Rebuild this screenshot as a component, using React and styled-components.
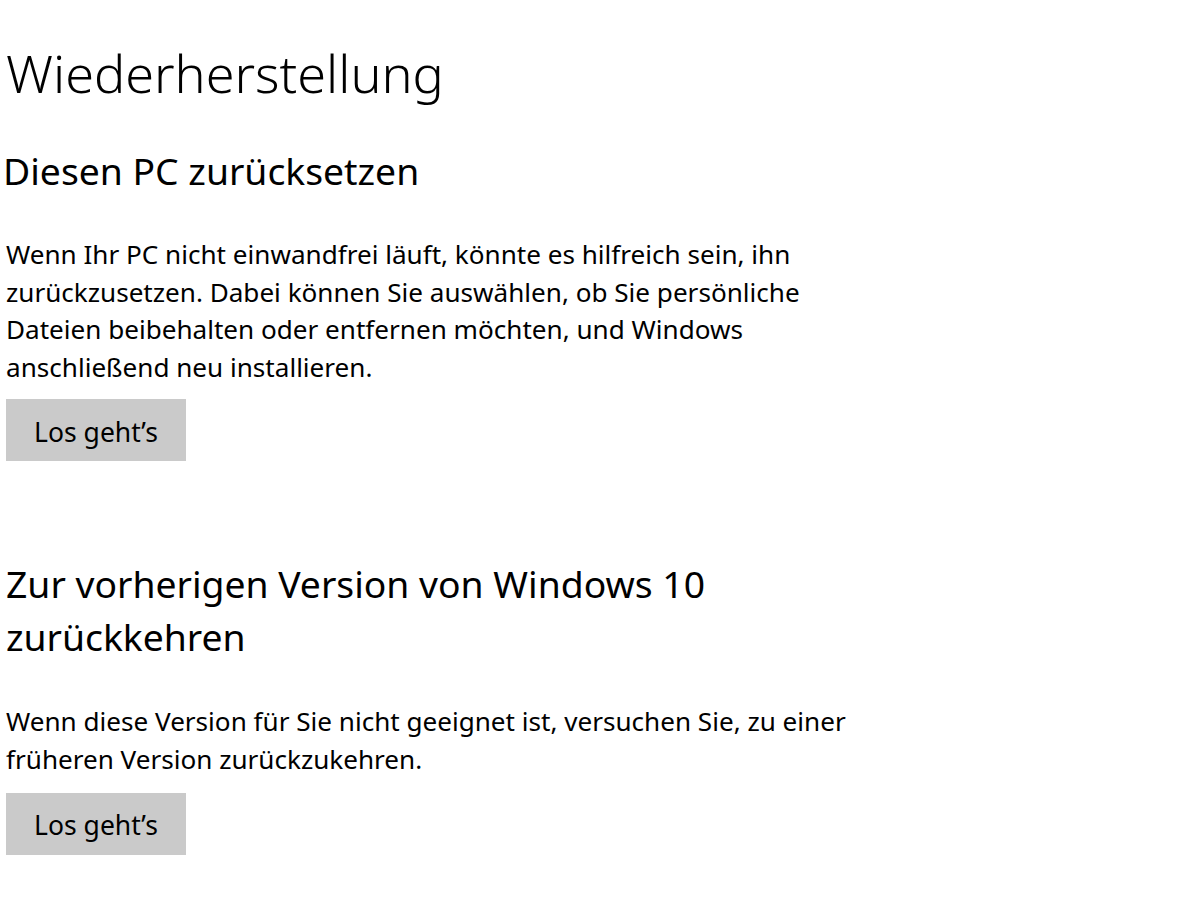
import React from "react";
import styled, { createGlobalStyle } from "styled-components";

const Global = createGlobalStyle`
  html, body { margin: 0; padding: 0; background: #ffffff; }
  body { font-family: "Noto Sans", "Open Sans", sans-serif; color: #000; }
`;

const Page = styled.main`
  padding: 41px 0 0 6px;
  display: flex;
  flex-direction: column;
`;

const Title = styled.h1`
  margin: 0;
  font-size: 52.2px;
  font-weight: 300;
  line-height: 64px;
  white-space: nowrap;
`;

const Section = styled.section`
  display: flex;
  flex-direction: column;
  align-items: flex-start;
  margin-top: ${(p) => p.$top}px;
`;

const Heading = styled.h2`
  margin: 0 0 0 ${(p) => p.$shift || 0}px;
  font-size: 37.3px;
  font-weight: 400;
  line-height: 53px;
  white-space: nowrap;
`;

const Text = styled.p`
  margin: ${(p) => p.$gap}px 0 0;
  font-size: 26.1px;
  line-height: 37.6px;
  white-space: nowrap;
`;

const Button = styled.button`
  margin-top: ${(p) => p.$gap}px;
  width: 180px;
  height: 62px;
  border: none;
  padding: 3px 0 0;
  background-color: #cccccc;
  background-image: radial-gradient(rgba(0, 0, 0, 0.025) 0.6px, transparent 0.8px);
  background-size: 2px 2px;
  font-family: inherit;
  font-size: 26.5px;
  line-height: 1;
  color: #000;
  cursor: pointer;
`;

export default function App() {
  return (
    <>
      <Global />
      <Page>
        <Title>Wiederherstellung</Title>
        <Section $top={39}>
          <Heading $shift={-3}>Diesen PC zurücksetzen</Heading>
          <Text $gap={39}>
            Wenn Ihr PC nicht einwandfrei läuft, könnte es hilfreich sein, ihn
            <br />
            zurückzusetzen. Dabei können Sie auswählen, ob Sie persönliche
            <br />
            Dateien beibehalten oder entfernen möchten, und Windows
            <br />
            anschließend neu installieren.
          </Text>
          <Button $gap={13}>Los geht’s</Button>
        </Section>
        <Section $top={96}>
          <Heading>
            Zur vorherigen Version von Windows 10
            <br />
            zurückkehren
          </Heading>
          <Text $gap={40}>
            Wenn diese Version für Sie nicht geeignet ist, versuchen Sie, zu einer
            <br />
            früheren Version zurückzukehren.
          </Text>
          <Button $gap={14}>Los geht’s</Button>
        </Section>
      </Page>
    </>
  );
}
